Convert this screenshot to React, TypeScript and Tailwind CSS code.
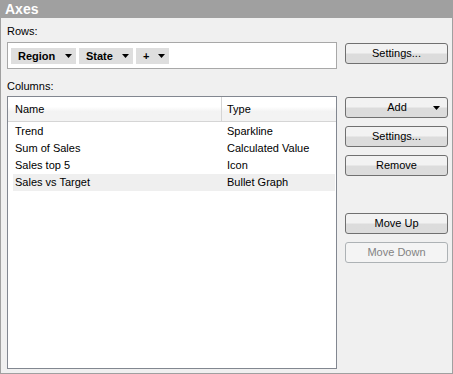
import React from 'react'

const font = { fontFamily: '"Liberation Sans", Arial, sans-serif' }

function Caret({ className = '' }: { className?: string }) {
  return (
    <svg width="7" height="4" viewBox="0 0 7 4" className={className}>
      <path d="M0 0h7L3.5 4z" fill="#000" />
    </svg>
  )
}

function Chip({ label, width }: { label: string; width: string }) {
  return (
    <div className={`flex h-[16px] items-center justify-between bg-[#dedede] pl-[7px] pr-[4px] text-[11px] font-bold text-black ${width}`}>
      <span>{label}</span>
      <Caret />
    </div>
  )
}

function Btn({
  children,
  disabled,
  className = '',
}: {
  children: React.ReactNode
  disabled?: boolean
  className?: string
}) {
  return (
    <button
      type="button"
      disabled={disabled}
      style={font}
      className={`relative flex h-[21px] w-[103px] items-center justify-center rounded-[3px] border text-[11px] font-normal ${
        disabled
          ? 'border-[#adb2b5] bg-[#f4f4f4] text-[#838383]'
          : 'border-[#707070] bg-gradient-to-b from-[#f2f2f2] from-45% to-[#dcdcdc] to-55% text-black'
      } ${className}`}
    >
      {children}
    </button>
  )
}

const columns = [
  { name: 'Trend', type: 'Sparkline' },
  { name: 'Sum of Sales', type: 'Calculated Value' },
  { name: 'Sales top 5', type: 'Icon' },
  { name: 'Sales vs Target', type: 'Bullet Graph', selected: true },
]

export default function App() {
  return (
    <div
      style={font}
      className="flex h-[374px] w-[453px] flex-col border-x border-b border-[#a0a0a0] bg-[#f0f0f0] leading-[13px] text-black"
    >
      <div className="flex h-[18px] shrink-0 items-center bg-[#a0a0a0] pl-[4px] text-[14px] font-bold leading-none text-white">
        Axes
      </div>

      <div className="flex gap-[8px] pl-[6px]">
        <div className="flex w-[330px] flex-col">
          <div className="mt-[7px] text-[11px]">Rows:</div>
          <div className="mt-[4px] flex h-[27px] items-start gap-[3px] border border-[#a8a8a8] bg-white pl-[3px] pt-[5px]">
            <Chip label="Region" width="w-[65px]" />
            <Chip label="State" width="w-[54px]" />
            <Chip label="+" width="w-[33px]" />
          </div>

          <div className="mt-[11px] text-[11px]">Columns:</div>
          <div className="mt-[3px] flex h-[273px] flex-col border border-[#828790] bg-white">
            <div className="flex h-[25px] shrink-0 border-b border-[#d5d5d5] bg-gradient-to-b from-white from-40% to-[#f3f3f3] to-60% text-[11px]">
              <div className="flex w-[214px] items-center border-r border-[#d5d5d5] pl-[7px]">Name</div>
              <div className="flex items-center pl-[5px]">Type</div>
            </div>
            <div className="flex flex-col pl-[5px] pr-[1px] pt-[1px]">
              {columns.map((c) => (
                <div
                  key={c.name}
                  className={`flex h-[17px] items-center text-[11px] ${c.selected ? 'bg-[#efefef]' : ''}`}
                >
                  <span className="w-[214px] pl-[2px]">{c.name}</span>
                  <span>{c.type}</span>
                </div>
              ))}
            </div>
          </div>
        </div>

        <div className="flex flex-col">
          <Btn className="mt-[25px]">Settings...</Btn>
          <Btn className="mt-[33px]">
            <span className="pl-[1px]">Add</span>
            <Caret className="absolute right-[7px] top-[8px]" />
          </Btn>
          <Btn className="mt-[8px]">Settings...</Btn>
          <Btn className="mt-[8px]">Remove</Btn>
          <Btn className="mt-[37px]">Move Up</Btn>
          <Btn className="mt-[8px]" disabled>
            Move Down
          </Btn>
        </div>
      </div>
    </div>
  )
}
